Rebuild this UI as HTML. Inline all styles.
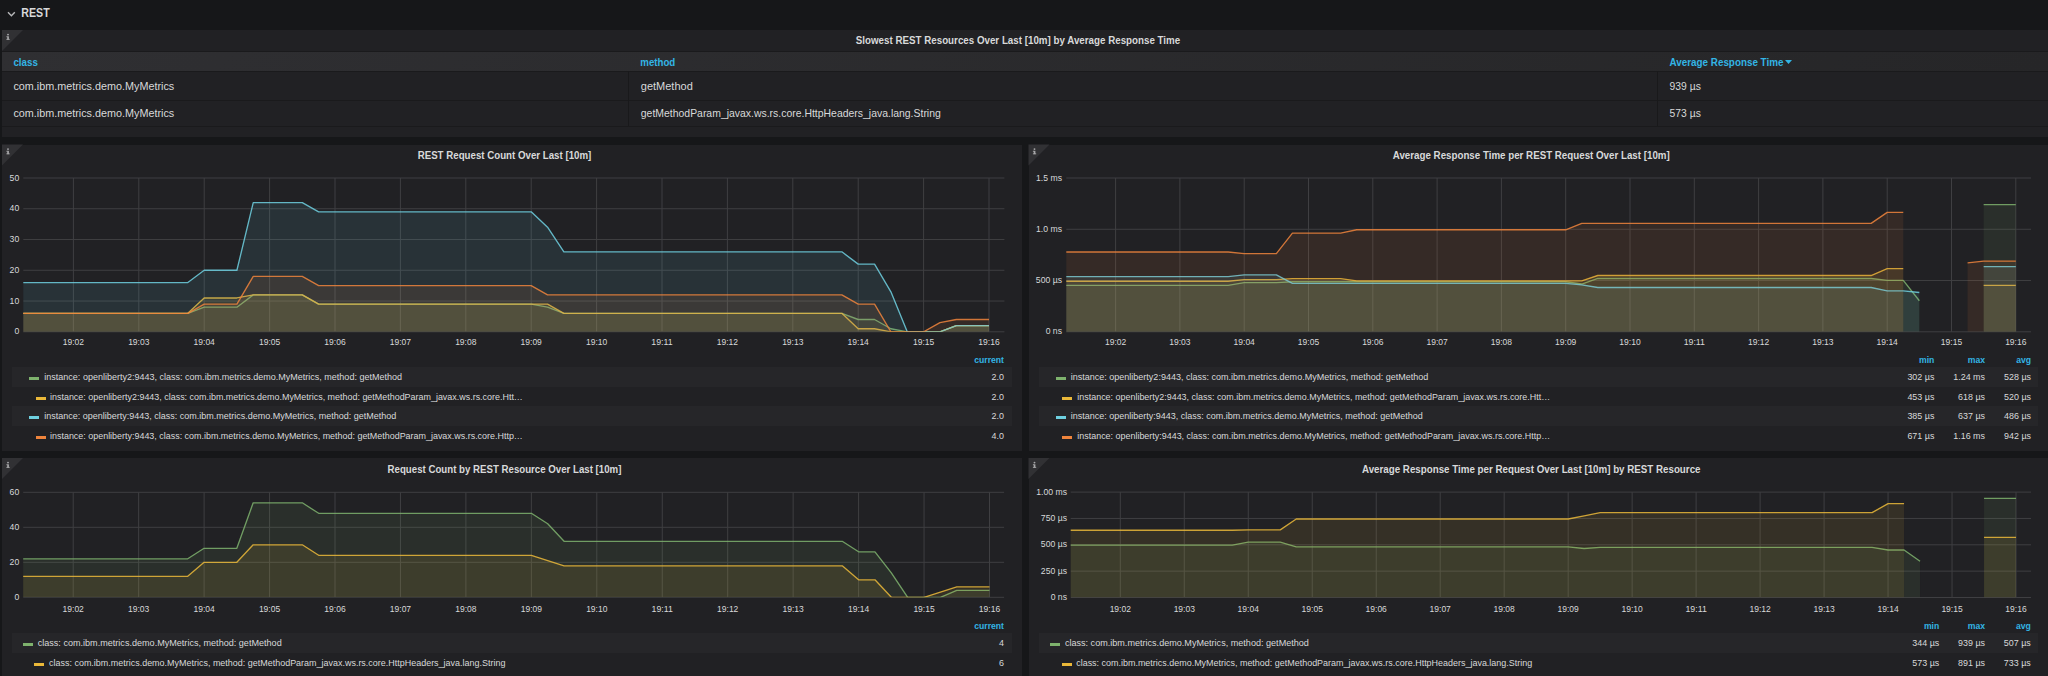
<!DOCTYPE html>
<html><head><meta charset="utf-8"><title>Grafana - REST</title>
<style>
html,body{margin:0;padding:0;width:2048px;height:676px;overflow:hidden;background:#161719;}
#wrap{position:relative;width:2048px;height:676px;overflow:hidden;font-family:"Liberation Sans",sans-serif;}
svg{position:absolute;left:0;top:0;}
svg text{font-family:"Liberation Sans",sans-serif;}
</style></head><body><div id="wrap">
<div style="position:absolute;left:2px;top:30px;width:2046px;height:107px;background:#212124;"></div><div style="position:absolute;left:2px;top:52px;width:2046px;height:19px;background:linear-gradient(135deg,#2f2f32,#262628);"></div><div style="position:absolute;left:2px;top:51px;width:2046px;height:1px;background:#1a1a1c;"></div><div style="position:absolute;left:2px;top:70.7px;width:2046px;height:1px;background:#1a1a1c;"></div><div style="position:absolute;left:2px;top:99.6px;width:2046px;height:1px;background:#1a1a1c;"></div><div style="position:absolute;left:2px;top:126px;width:2046px;height:1px;background:#1a1a1c;"></div><div style="position:absolute;left:628px;top:71px;width:1px;height:55px;background:#19191b;"></div><div style="position:absolute;left:1657px;top:71px;width:1px;height:55px;background:#19191b;"></div><div style="position:absolute;left:2px;top:144.5px;width:1019.5px;height:306.5px;background:#212124;"></div><div style="position:absolute;left:12px;top:367.3px;width:1000px;height:19.55px;background:#262629;"></div><div style="position:absolute;left:29px;top:377.275px;width:10px;height:3px;background:#7EB26D;"></div><div style="position:absolute;left:35.6px;top:396.825px;width:10px;height:3px;background:#EAB839;"></div><div style="position:absolute;left:12px;top:406.40000000000003px;width:1000px;height:19.55px;background:#262629;"></div><div style="position:absolute;left:29px;top:416.375px;width:10px;height:3px;background:#6ED0E0;"></div><div style="position:absolute;left:35.6px;top:435.925px;width:10px;height:3px;background:#EF843C;"></div><div style="position:absolute;left:1028.5px;top:144.5px;width:1019.5px;height:306.5px;background:#212124;"></div><div style="position:absolute;left:1038.5px;top:367.3px;width:999.7px;height:19.55px;background:#262629;"></div><div style="position:absolute;left:1055.7px;top:377.275px;width:10px;height:3px;background:#7EB26D;"></div><div style="position:absolute;left:1062.3px;top:396.825px;width:10px;height:3px;background:#EAB839;"></div><div style="position:absolute;left:1038.5px;top:406.40000000000003px;width:999.7px;height:19.55px;background:#262629;"></div><div style="position:absolute;left:1055.7px;top:416.375px;width:10px;height:3px;background:#6ED0E0;"></div><div style="position:absolute;left:1062.3px;top:435.925px;width:10px;height:3px;background:#EF843C;"></div><div style="position:absolute;left:2px;top:458px;width:1019.5px;height:222px;background:#212124;"></div><div style="position:absolute;left:12px;top:632.7px;width:1000px;height:20.2px;background:#262629;"></div><div style="position:absolute;left:23.2px;top:643.0000000000001px;width:10px;height:3px;background:#7EB26D;"></div><div style="position:absolute;left:34.3px;top:663.2000000000002px;width:10px;height:3px;background:#EAB839;"></div><div style="position:absolute;left:1028.5px;top:458px;width:1019.5px;height:222px;background:#212124;"></div><div style="position:absolute;left:1038.5px;top:632.7px;width:999.7px;height:20.2px;background:#262629;"></div><div style="position:absolute;left:1050.4px;top:643.0000000000001px;width:10px;height:3px;background:#7EB26D;"></div><div style="position:absolute;left:1061.5px;top:663.2000000000002px;width:10px;height:3px;background:#EAB839;"></div>
<svg width="2048" height="676" viewBox="0 0 2048 676">
<text x="21.3" y="16.7" font-size="12.4" fill="#d8d9da" text-anchor="start" font-weight="bold" textLength="28.4" lengthAdjust="spacingAndGlyphs">REST</text><path d="M8,12.3 L11.4,15.8 L14.8,12.3" fill="none" stroke="#b7b8ba" stroke-width="1.4"/><path d="M2,30 L23,30 L2,51 Z" fill="#313134"/><g fill="#a8a8aa"><circle cx="8.0" cy="34.6" r="0.95"/><rect x="7.2" y="36.3" width="1.7" height="3.3"/><rect x="6.4" y="38.9" width="3.3" height="0.9"/><rect x="6.4" y="36.3" width="1.2" height="0.9"/></g><text x="1018" y="44.0" font-size="11.5" fill="#d8d9da" text-anchor="middle" font-weight="bold" textLength="324.4" lengthAdjust="spacingAndGlyphs">Slowest REST Resources Over Last [10m] by Average Response Time</text><text x="13.4" y="65.6" font-size="10.8" fill="#33b5e5" text-anchor="start" font-weight="bold" textLength="24.5" lengthAdjust="spacingAndGlyphs">class</text><text x="640.3" y="65.6" font-size="10.8" fill="#33b5e5" text-anchor="start" font-weight="bold" textLength="35" lengthAdjust="spacingAndGlyphs">method</text><text x="1669.6" y="65.6" font-size="10.8" fill="#33b5e5" text-anchor="start" font-weight="bold" textLength="113.8" lengthAdjust="spacingAndGlyphs">Average Response Time</text><path d="M1785,60.1 L1792,60.1 L1788.5,64 Z" fill="#33b5e5"/><text x="13.4" y="90.45" font-size="11" fill="#d8d9da" text-anchor="start" textLength="160.8" lengthAdjust="spacingAndGlyphs">com.ibm.metrics.demo.MyMetrics</text><text x="640.8" y="90.45" font-size="11" fill="#d8d9da" text-anchor="start">getMethod</text><text x="1669.6" y="90.45" font-size="11" fill="#d8d9da" text-anchor="start" textLength="31.25" lengthAdjust="spacingAndGlyphs">939 µs</text><text x="13.4" y="116.7" font-size="11" fill="#d8d9da" text-anchor="start" textLength="160.8" lengthAdjust="spacingAndGlyphs">com.ibm.metrics.demo.MyMetrics</text><text x="640.8" y="116.7" font-size="11" fill="#d8d9da" text-anchor="start" textLength="300" lengthAdjust="spacingAndGlyphs">getMethodParam_javax.ws.rs.core.HttpHeaders_java.lang.String</text><text x="1669.6" y="116.7" font-size="11" fill="#d8d9da" text-anchor="start" textLength="31.25" lengthAdjust="spacingAndGlyphs">573 µs</text><path d="M2,144.5 L23,144.5 L2,165.5 Z" fill="#313134"/><g fill="#a8a8aa"><circle cx="8.0" cy="149.1" r="0.95"/><rect x="7.2" y="150.8" width="1.7" height="3.3"/><rect x="6.4" y="153.4" width="3.3" height="0.9"/><rect x="6.4" y="150.8" width="1.2" height="0.9"/></g><text x="504.5" y="158.8" font-size="11.3" fill="#d8d9da" text-anchor="middle" font-weight="bold" textLength="173.7" lengthAdjust="spacingAndGlyphs">REST Request Count Over Last [10m]</text><line x1="23.3" y1="331.80" x2="1004.4" y2="331.80" stroke="#3f3f42" stroke-width="1"/><text x="19.2" y="334.40000000000003" font-size="9.4" fill="#d8d9da" text-anchor="end" textLength="4.81" lengthAdjust="spacingAndGlyphs">0</text><line x1="23.3" y1="301.04" x2="1004.4" y2="301.04" stroke="#3f3f42" stroke-width="1"/><text x="19.2" y="303.64000000000004" font-size="9.4" fill="#d8d9da" text-anchor="end" textLength="9.62" lengthAdjust="spacingAndGlyphs">10</text><line x1="23.3" y1="270.28" x2="1004.4" y2="270.28" stroke="#3f3f42" stroke-width="1"/><text x="19.2" y="272.88" font-size="9.4" fill="#d8d9da" text-anchor="end" textLength="9.62" lengthAdjust="spacingAndGlyphs">20</text><line x1="23.3" y1="239.52" x2="1004.4" y2="239.52" stroke="#3f3f42" stroke-width="1"/><text x="19.2" y="242.12" font-size="9.4" fill="#d8d9da" text-anchor="end" textLength="9.62" lengthAdjust="spacingAndGlyphs">30</text><line x1="23.3" y1="208.76" x2="1004.4" y2="208.76" stroke="#3f3f42" stroke-width="1"/><text x="19.2" y="211.35999999999999" font-size="9.4" fill="#d8d9da" text-anchor="end" textLength="9.62" lengthAdjust="spacingAndGlyphs">40</text><line x1="23.3" y1="178.00" x2="1004.4" y2="178.00" stroke="#3f3f42" stroke-width="1"/><text x="19.2" y="180.6" font-size="9.4" fill="#d8d9da" text-anchor="end" textLength="9.62" lengthAdjust="spacingAndGlyphs">50</text><line x1="73.40" y1="178" x2="73.40" y2="331.8" stroke="#3f3f42" stroke-width="1"/><text x="73.4" y="345.2" font-size="9.4" fill="#d8d9da" text-anchor="middle" textLength="21.3" lengthAdjust="spacingAndGlyphs">19:02</text><line x1="138.80" y1="178" x2="138.80" y2="331.8" stroke="#3f3f42" stroke-width="1"/><text x="138.8" y="345.2" font-size="9.4" fill="#d8d9da" text-anchor="middle" textLength="21.3" lengthAdjust="spacingAndGlyphs">19:03</text><line x1="204.20" y1="178" x2="204.20" y2="331.8" stroke="#3f3f42" stroke-width="1"/><text x="204.20000000000002" y="345.2" font-size="9.4" fill="#d8d9da" text-anchor="middle" textLength="21.3" lengthAdjust="spacingAndGlyphs">19:04</text><line x1="269.60" y1="178" x2="269.60" y2="331.8" stroke="#3f3f42" stroke-width="1"/><text x="269.6" y="345.2" font-size="9.4" fill="#d8d9da" text-anchor="middle" textLength="21.3" lengthAdjust="spacingAndGlyphs">19:05</text><line x1="335.00" y1="178" x2="335.00" y2="331.8" stroke="#3f3f42" stroke-width="1"/><text x="335.0" y="345.2" font-size="9.4" fill="#d8d9da" text-anchor="middle" textLength="21.3" lengthAdjust="spacingAndGlyphs">19:06</text><line x1="400.40" y1="178" x2="400.40" y2="331.8" stroke="#3f3f42" stroke-width="1"/><text x="400.4" y="345.2" font-size="9.4" fill="#d8d9da" text-anchor="middle" textLength="21.3" lengthAdjust="spacingAndGlyphs">19:07</text><line x1="465.80" y1="178" x2="465.80" y2="331.8" stroke="#3f3f42" stroke-width="1"/><text x="465.80000000000007" y="345.2" font-size="9.4" fill="#d8d9da" text-anchor="middle" textLength="21.3" lengthAdjust="spacingAndGlyphs">19:08</text><line x1="531.20" y1="178" x2="531.20" y2="331.8" stroke="#3f3f42" stroke-width="1"/><text x="531.2" y="345.2" font-size="9.4" fill="#d8d9da" text-anchor="middle" textLength="21.3" lengthAdjust="spacingAndGlyphs">19:09</text><line x1="596.60" y1="178" x2="596.60" y2="331.8" stroke="#3f3f42" stroke-width="1"/><text x="596.6" y="345.2" font-size="9.4" fill="#d8d9da" text-anchor="middle" textLength="21.3" lengthAdjust="spacingAndGlyphs">19:10</text><line x1="662.00" y1="178" x2="662.00" y2="331.8" stroke="#3f3f42" stroke-width="1"/><text x="662.0" y="345.2" font-size="9.4" fill="#d8d9da" text-anchor="middle" textLength="21.3" lengthAdjust="spacingAndGlyphs">19:11</text><line x1="727.40" y1="178" x2="727.40" y2="331.8" stroke="#3f3f42" stroke-width="1"/><text x="727.4" y="345.2" font-size="9.4" fill="#d8d9da" text-anchor="middle" textLength="21.3" lengthAdjust="spacingAndGlyphs">19:12</text><line x1="792.80" y1="178" x2="792.80" y2="331.8" stroke="#3f3f42" stroke-width="1"/><text x="792.8000000000001" y="345.2" font-size="9.4" fill="#d8d9da" text-anchor="middle" textLength="21.3" lengthAdjust="spacingAndGlyphs">19:13</text><line x1="858.20" y1="178" x2="858.20" y2="331.8" stroke="#3f3f42" stroke-width="1"/><text x="858.2" y="345.2" font-size="9.4" fill="#d8d9da" text-anchor="middle" textLength="21.3" lengthAdjust="spacingAndGlyphs">19:14</text><line x1="923.60" y1="178" x2="923.60" y2="331.8" stroke="#3f3f42" stroke-width="1"/><text x="923.6" y="345.2" font-size="9.4" fill="#d8d9da" text-anchor="middle" textLength="21.3" lengthAdjust="spacingAndGlyphs">19:15</text><line x1="989.00" y1="178" x2="989.00" y2="331.8" stroke="#3f3f42" stroke-width="1"/><text x="989.0000000000001" y="345.2" font-size="9.4" fill="#d8d9da" text-anchor="middle" textLength="21.3" lengthAdjust="spacingAndGlyphs">19:16</text><clipPath id="c1"><rect x="23.3" y="176" width="981.1" height="155.8"/></clipPath><g clip-path="url(#c1)"><path d="M22.30,313.34 L24.35,313.34 L40.70,313.34 L57.05,313.34 L73.40,313.34 L89.75,313.34 L106.10,313.34 L122.45,313.34 L138.80,313.34 L155.15,313.34 L171.50,313.34 L187.85,313.34 L204.20,307.19 L220.55,307.19 L236.90,307.19 L253.25,294.89 L269.60,294.89 L285.95,294.89 L302.30,294.89 L318.65,304.12 L335.00,304.12 L351.35,304.12 L367.70,304.12 L384.05,304.12 L400.40,304.12 L416.75,304.12 L433.10,304.12 L449.45,304.12 L465.80,304.12 L482.15,304.12 L498.50,304.12 L514.85,304.12 L531.20,304.12 L547.55,307.19 L563.90,313.34 L580.25,313.34 L596.60,313.34 L612.95,313.34 L629.30,313.34 L645.65,313.34 L662.00,313.34 L678.35,313.34 L694.70,313.34 L711.05,313.34 L727.40,313.34 L743.75,313.34 L760.10,313.34 L776.45,313.34 L792.80,313.34 L809.15,313.34 L825.50,313.34 L841.85,313.34 L858.20,319.50 L874.55,319.50 L890.90,328.72 L907.25,331.80 L923.60,331.80 L939.95,331.80 L956.30,325.65 L972.65,325.65 L989.00,325.65 L989.00,331.8 L22.30,331.8 Z" fill="#7EB26D" fill-opacity="0.1"/><path d="M22.30,313.34 L24.35,313.34 L40.70,313.34 L57.05,313.34 L73.40,313.34 L89.75,313.34 L106.10,313.34 L122.45,313.34 L138.80,313.34 L155.15,313.34 L171.50,313.34 L187.85,313.34 L204.20,307.19 L220.55,307.19 L236.90,307.19 L253.25,294.89 L269.60,294.89 L285.95,294.89 L302.30,294.89 L318.65,304.12 L335.00,304.12 L351.35,304.12 L367.70,304.12 L384.05,304.12 L400.40,304.12 L416.75,304.12 L433.10,304.12 L449.45,304.12 L465.80,304.12 L482.15,304.12 L498.50,304.12 L514.85,304.12 L531.20,304.12 L547.55,307.19 L563.90,313.34 L580.25,313.34 L596.60,313.34 L612.95,313.34 L629.30,313.34 L645.65,313.34 L662.00,313.34 L678.35,313.34 L694.70,313.34 L711.05,313.34 L727.40,313.34 L743.75,313.34 L760.10,313.34 L776.45,313.34 L792.80,313.34 L809.15,313.34 L825.50,313.34 L841.85,313.34 L858.20,319.50 L874.55,319.50 L890.90,328.72 L907.25,331.80 L923.60,331.80 L939.95,331.80 L956.30,325.65 L972.65,325.65 L989.00,325.65" fill="none" stroke="#7EB26D" stroke-width="1.35" stroke-opacity="0.85" stroke-linejoin="round"/><path d="M22.30,313.34 L24.35,313.34 L40.70,313.34 L57.05,313.34 L73.40,313.34 L89.75,313.34 L106.10,313.34 L122.45,313.34 L138.80,313.34 L155.15,313.34 L171.50,313.34 L187.85,313.34 L204.20,297.96 L220.55,297.96 L236.90,297.96 L253.25,294.89 L269.60,294.89 L285.95,294.89 L302.30,294.89 L318.65,304.12 L335.00,304.12 L351.35,304.12 L367.70,304.12 L384.05,304.12 L400.40,304.12 L416.75,304.12 L433.10,304.12 L449.45,304.12 L465.80,304.12 L482.15,304.12 L498.50,304.12 L514.85,304.12 L531.20,304.12 L547.55,304.12 L563.90,313.34 L580.25,313.34 L596.60,313.34 L612.95,313.34 L629.30,313.34 L645.65,313.34 L662.00,313.34 L678.35,313.34 L694.70,313.34 L711.05,313.34 L727.40,313.34 L743.75,313.34 L760.10,313.34 L776.45,313.34 L792.80,313.34 L809.15,313.34 L825.50,313.34 L841.85,313.34 L858.20,328.72 L874.55,328.72 L890.90,331.80 L907.25,331.80 L923.60,331.80 L939.95,331.80 L956.30,325.65 L972.65,325.65 L989.00,325.65 L989.00,331.8 L22.30,331.8 Z" fill="#EAB839" fill-opacity="0.1"/><path d="M22.30,313.34 L24.35,313.34 L40.70,313.34 L57.05,313.34 L73.40,313.34 L89.75,313.34 L106.10,313.34 L122.45,313.34 L138.80,313.34 L155.15,313.34 L171.50,313.34 L187.85,313.34 L204.20,297.96 L220.55,297.96 L236.90,297.96 L253.25,294.89 L269.60,294.89 L285.95,294.89 L302.30,294.89 L318.65,304.12 L335.00,304.12 L351.35,304.12 L367.70,304.12 L384.05,304.12 L400.40,304.12 L416.75,304.12 L433.10,304.12 L449.45,304.12 L465.80,304.12 L482.15,304.12 L498.50,304.12 L514.85,304.12 L531.20,304.12 L547.55,304.12 L563.90,313.34 L580.25,313.34 L596.60,313.34 L612.95,313.34 L629.30,313.34 L645.65,313.34 L662.00,313.34 L678.35,313.34 L694.70,313.34 L711.05,313.34 L727.40,313.34 L743.75,313.34 L760.10,313.34 L776.45,313.34 L792.80,313.34 L809.15,313.34 L825.50,313.34 L841.85,313.34 L858.20,328.72 L874.55,328.72 L890.90,331.80 L907.25,331.80 L923.60,331.80 L939.95,331.80 L956.30,325.65 L972.65,325.65 L989.00,325.65" fill="none" stroke="#EAB839" stroke-width="1.35" stroke-opacity="0.85" stroke-linejoin="round"/><path d="M22.30,282.58 L24.35,282.58 L40.70,282.58 L57.05,282.58 L73.40,282.58 L89.75,282.58 L106.10,282.58 L122.45,282.58 L138.80,282.58 L155.15,282.58 L171.50,282.58 L187.85,282.58 L204.20,270.28 L220.55,270.28 L236.90,270.28 L253.25,202.61 L269.60,202.61 L285.95,202.61 L302.30,202.61 L318.65,211.84 L335.00,211.84 L351.35,211.84 L367.70,211.84 L384.05,211.84 L400.40,211.84 L416.75,211.84 L433.10,211.84 L449.45,211.84 L465.80,211.84 L482.15,211.84 L498.50,211.84 L514.85,211.84 L531.20,211.84 L547.55,227.22 L563.90,251.82 L580.25,251.82 L596.60,251.82 L612.95,251.82 L629.30,251.82 L645.65,251.82 L662.00,251.82 L678.35,251.82 L694.70,251.82 L711.05,251.82 L727.40,251.82 L743.75,251.82 L760.10,251.82 L776.45,251.82 L792.80,251.82 L809.15,251.82 L825.50,251.82 L841.85,251.82 L858.20,264.13 L874.55,264.13 L890.90,291.81 L907.25,331.80 L923.60,331.80 L939.95,331.80 L956.30,325.65 L972.65,325.65 L989.00,325.65 L989.00,331.8 L22.30,331.8 Z" fill="#6ED0E0" fill-opacity="0.1"/><path d="M22.30,282.58 L24.35,282.58 L40.70,282.58 L57.05,282.58 L73.40,282.58 L89.75,282.58 L106.10,282.58 L122.45,282.58 L138.80,282.58 L155.15,282.58 L171.50,282.58 L187.85,282.58 L204.20,270.28 L220.55,270.28 L236.90,270.28 L253.25,202.61 L269.60,202.61 L285.95,202.61 L302.30,202.61 L318.65,211.84 L335.00,211.84 L351.35,211.84 L367.70,211.84 L384.05,211.84 L400.40,211.84 L416.75,211.84 L433.10,211.84 L449.45,211.84 L465.80,211.84 L482.15,211.84 L498.50,211.84 L514.85,211.84 L531.20,211.84 L547.55,227.22 L563.90,251.82 L580.25,251.82 L596.60,251.82 L612.95,251.82 L629.30,251.82 L645.65,251.82 L662.00,251.82 L678.35,251.82 L694.70,251.82 L711.05,251.82 L727.40,251.82 L743.75,251.82 L760.10,251.82 L776.45,251.82 L792.80,251.82 L809.15,251.82 L825.50,251.82 L841.85,251.82 L858.20,264.13 L874.55,264.13 L890.90,291.81 L907.25,331.80 L923.60,331.80 L939.95,331.80 L956.30,325.65 L972.65,325.65 L989.00,325.65" fill="none" stroke="#6ED0E0" stroke-width="1.35" stroke-opacity="0.85" stroke-linejoin="round"/><path d="M22.30,313.34 L24.35,313.34 L40.70,313.34 L57.05,313.34 L73.40,313.34 L89.75,313.34 L106.10,313.34 L122.45,313.34 L138.80,313.34 L155.15,313.34 L171.50,313.34 L187.85,313.34 L204.20,304.12 L220.55,304.12 L236.90,304.12 L253.25,276.43 L269.60,276.43 L285.95,276.43 L302.30,276.43 L318.65,285.66 L335.00,285.66 L351.35,285.66 L367.70,285.66 L384.05,285.66 L400.40,285.66 L416.75,285.66 L433.10,285.66 L449.45,285.66 L465.80,285.66 L482.15,285.66 L498.50,285.66 L514.85,285.66 L531.20,285.66 L547.55,294.89 L563.90,294.89 L580.25,294.89 L596.60,294.89 L612.95,294.89 L629.30,294.89 L645.65,294.89 L662.00,294.89 L678.35,294.89 L694.70,294.89 L711.05,294.89 L727.40,294.89 L743.75,294.89 L760.10,294.89 L776.45,294.89 L792.80,294.89 L809.15,294.89 L825.50,294.89 L841.85,294.89 L858.20,304.12 L874.55,304.12 L890.90,331.80 L907.25,331.80 L923.60,331.80 L939.95,322.57 L956.30,319.50 L972.65,319.50 L989.00,319.50 L989.00,331.8 L22.30,331.8 Z" fill="#EF843C" fill-opacity="0.1"/><path d="M22.30,313.34 L24.35,313.34 L40.70,313.34 L57.05,313.34 L73.40,313.34 L89.75,313.34 L106.10,313.34 L122.45,313.34 L138.80,313.34 L155.15,313.34 L171.50,313.34 L187.85,313.34 L204.20,304.12 L220.55,304.12 L236.90,304.12 L253.25,276.43 L269.60,276.43 L285.95,276.43 L302.30,276.43 L318.65,285.66 L335.00,285.66 L351.35,285.66 L367.70,285.66 L384.05,285.66 L400.40,285.66 L416.75,285.66 L433.10,285.66 L449.45,285.66 L465.80,285.66 L482.15,285.66 L498.50,285.66 L514.85,285.66 L531.20,285.66 L547.55,294.89 L563.90,294.89 L580.25,294.89 L596.60,294.89 L612.95,294.89 L629.30,294.89 L645.65,294.89 L662.00,294.89 L678.35,294.89 L694.70,294.89 L711.05,294.89 L727.40,294.89 L743.75,294.89 L760.10,294.89 L776.45,294.89 L792.80,294.89 L809.15,294.89 L825.50,294.89 L841.85,294.89 L858.20,304.12 L874.55,304.12 L890.90,331.80 L907.25,331.80 L923.60,331.80 L939.95,322.57 L956.30,319.50 L972.65,319.50 L989.00,319.50" fill="none" stroke="#EF843C" stroke-width="1.35" stroke-opacity="0.85" stroke-linejoin="round"/></g><text x="1004" y="363.0" font-size="9.4" fill="#33b5e5" text-anchor="end" font-weight="bold" textLength="29.79" lengthAdjust="spacingAndGlyphs">current</text><text x="44.3" y="380.275" font-size="9.3" fill="#d8d9da" text-anchor="start" textLength="357.7" lengthAdjust="spacingAndGlyphs">instance: openliberty2:9443, class: com.ibm.metrics.demo.MyMetrics, method: getMethod</text><text x="1004" y="380.275" font-size="9.3" fill="#d8d9da" text-anchor="end" textLength="12.41" lengthAdjust="spacingAndGlyphs">2.0</text><text x="50" y="399.825" font-size="9.3" fill="#d8d9da" text-anchor="start" textLength="472.8" lengthAdjust="spacingAndGlyphs">instance: openliberty2:9443, class: com.ibm.metrics.demo.MyMetrics, method: getMethodParam_javax.ws.rs.core.Htt…</text><text x="1004" y="399.825" font-size="9.3" fill="#d8d9da" text-anchor="end" textLength="12.41" lengthAdjust="spacingAndGlyphs">2.0</text><text x="44.3" y="419.375" font-size="9.3" fill="#d8d9da" text-anchor="start" textLength="352" lengthAdjust="spacingAndGlyphs">instance: openliberty:9443, class: com.ibm.metrics.demo.MyMetrics, method: getMethod</text><text x="1004" y="419.375" font-size="9.3" fill="#d8d9da" text-anchor="end" textLength="12.41" lengthAdjust="spacingAndGlyphs">2.0</text><text x="50" y="438.925" font-size="9.3" fill="#d8d9da" text-anchor="start" textLength="472.8" lengthAdjust="spacingAndGlyphs">instance: openliberty:9443, class: com.ibm.metrics.demo.MyMetrics, method: getMethodParam_javax.ws.rs.core.Http…</text><text x="1004" y="438.925" font-size="9.3" fill="#d8d9da" text-anchor="end" textLength="12.41" lengthAdjust="spacingAndGlyphs">4.0</text><path d="M1028.5,144.5 L1049.5,144.5 L1028.5,165.5 Z" fill="#313134"/><g fill="#a8a8aa"><circle cx="1034.5" cy="149.1" r="0.95"/><rect x="1033.7" y="150.8" width="1.7" height="3.3"/><rect x="1032.9" y="153.4" width="3.3" height="0.9"/><rect x="1032.9" y="150.8" width="1.2" height="0.9"/></g><text x="1531.25" y="158.8" font-size="11.3" fill="#d8d9da" text-anchor="middle" font-weight="bold" textLength="277" lengthAdjust="spacingAndGlyphs">Average Response Time per REST Request Over Last [10m]</text><line x1="1066.3" y1="331.80" x2="2031" y2="331.80" stroke="#3f3f42" stroke-width="1"/><text x="1062" y="334.40000000000003" font-size="9.4" fill="#d8d9da" text-anchor="end" textLength="16.34" lengthAdjust="spacingAndGlyphs">0 ns</text><line x1="1066.3" y1="280.53" x2="2031" y2="280.53" stroke="#3f3f42" stroke-width="1"/><text x="1062" y="283.1333333333334" font-size="9.4" fill="#d8d9da" text-anchor="end" textLength="26.14" lengthAdjust="spacingAndGlyphs">500 µs</text><line x1="1066.3" y1="229.27" x2="2031" y2="229.27" stroke="#3f3f42" stroke-width="1"/><text x="1062" y="231.86666666666667" font-size="9.4" fill="#d8d9da" text-anchor="end" textLength="25.95" lengthAdjust="spacingAndGlyphs">1.0 ms</text><line x1="1066.3" y1="178.00" x2="2031" y2="178.00" stroke="#3f3f42" stroke-width="1"/><text x="1062" y="180.6" font-size="9.4" fill="#d8d9da" text-anchor="end" textLength="25.95" lengthAdjust="spacingAndGlyphs">1.5 ms</text><line x1="1115.60" y1="178" x2="1115.60" y2="331.8" stroke="#3f3f42" stroke-width="1"/><text x="1115.6" y="345.2" font-size="9.4" fill="#d8d9da" text-anchor="middle" textLength="21.3" lengthAdjust="spacingAndGlyphs">19:02</text><line x1="1179.90" y1="178" x2="1179.90" y2="331.8" stroke="#3f3f42" stroke-width="1"/><text x="1179.8999999999999" y="345.2" font-size="9.4" fill="#d8d9da" text-anchor="middle" textLength="21.3" lengthAdjust="spacingAndGlyphs">19:03</text><line x1="1244.20" y1="178" x2="1244.20" y2="331.8" stroke="#3f3f42" stroke-width="1"/><text x="1244.1999999999998" y="345.2" font-size="9.4" fill="#d8d9da" text-anchor="middle" textLength="21.3" lengthAdjust="spacingAndGlyphs">19:04</text><line x1="1308.50" y1="178" x2="1308.50" y2="331.8" stroke="#3f3f42" stroke-width="1"/><text x="1308.5" y="345.2" font-size="9.4" fill="#d8d9da" text-anchor="middle" textLength="21.3" lengthAdjust="spacingAndGlyphs">19:05</text><line x1="1372.80" y1="178" x2="1372.80" y2="331.8" stroke="#3f3f42" stroke-width="1"/><text x="1372.8" y="345.2" font-size="9.4" fill="#d8d9da" text-anchor="middle" textLength="21.3" lengthAdjust="spacingAndGlyphs">19:06</text><line x1="1437.10" y1="178" x2="1437.10" y2="331.8" stroke="#3f3f42" stroke-width="1"/><text x="1437.1" y="345.2" font-size="9.4" fill="#d8d9da" text-anchor="middle" textLength="21.3" lengthAdjust="spacingAndGlyphs">19:07</text><line x1="1501.40" y1="178" x2="1501.40" y2="331.8" stroke="#3f3f42" stroke-width="1"/><text x="1501.3999999999999" y="345.2" font-size="9.4" fill="#d8d9da" text-anchor="middle" textLength="21.3" lengthAdjust="spacingAndGlyphs">19:08</text><line x1="1565.70" y1="178" x2="1565.70" y2="331.8" stroke="#3f3f42" stroke-width="1"/><text x="1565.6999999999998" y="345.2" font-size="9.4" fill="#d8d9da" text-anchor="middle" textLength="21.3" lengthAdjust="spacingAndGlyphs">19:09</text><line x1="1630.00" y1="178" x2="1630.00" y2="331.8" stroke="#3f3f42" stroke-width="1"/><text x="1630.0" y="345.2" font-size="9.4" fill="#d8d9da" text-anchor="middle" textLength="21.3" lengthAdjust="spacingAndGlyphs">19:10</text><line x1="1694.30" y1="178" x2="1694.30" y2="331.8" stroke="#3f3f42" stroke-width="1"/><text x="1694.2999999999997" y="345.2" font-size="9.4" fill="#d8d9da" text-anchor="middle" textLength="21.3" lengthAdjust="spacingAndGlyphs">19:11</text><line x1="1758.60" y1="178" x2="1758.60" y2="331.8" stroke="#3f3f42" stroke-width="1"/><text x="1758.6" y="345.2" font-size="9.4" fill="#d8d9da" text-anchor="middle" textLength="21.3" lengthAdjust="spacingAndGlyphs">19:12</text><line x1="1822.90" y1="178" x2="1822.90" y2="331.8" stroke="#3f3f42" stroke-width="1"/><text x="1822.8999999999999" y="345.2" font-size="9.4" fill="#d8d9da" text-anchor="middle" textLength="21.3" lengthAdjust="spacingAndGlyphs">19:13</text><line x1="1887.20" y1="178" x2="1887.20" y2="331.8" stroke="#3f3f42" stroke-width="1"/><text x="1887.1999999999998" y="345.2" font-size="9.4" fill="#d8d9da" text-anchor="middle" textLength="21.3" lengthAdjust="spacingAndGlyphs">19:14</text><line x1="1951.50" y1="178" x2="1951.50" y2="331.8" stroke="#3f3f42" stroke-width="1"/><text x="1951.5" y="345.2" font-size="9.4" fill="#d8d9da" text-anchor="middle" textLength="21.3" lengthAdjust="spacingAndGlyphs">19:15</text><line x1="2015.80" y1="178" x2="2015.80" y2="331.8" stroke="#3f3f42" stroke-width="1"/><text x="2015.7999999999997" y="345.2" font-size="9.4" fill="#d8d9da" text-anchor="middle" textLength="21.3" lengthAdjust="spacingAndGlyphs">19:16</text><clipPath id="c2"><rect x="1066.3" y="176" width="964.7" height="155.8"/></clipPath><g clip-path="url(#c2)"><path d="M1065.30,285.35 L1067.38,285.35 L1083.45,285.35 L1099.52,285.35 L1115.60,285.35 L1131.67,285.35 L1147.75,285.35 L1163.82,285.35 L1179.90,285.35 L1195.97,285.35 L1212.05,285.35 L1228.12,285.35 L1244.20,282.58 L1260.27,282.58 L1276.35,282.58 L1292.42,281.76 L1308.50,281.76 L1324.57,281.76 L1340.65,281.76 L1356.72,281.76 L1372.80,281.76 L1388.88,281.76 L1404.95,281.76 L1421.02,281.76 L1437.10,281.76 L1453.17,281.76 L1469.25,281.76 L1485.32,281.76 L1501.40,281.76 L1517.47,281.76 L1533.55,281.76 L1549.62,281.76 L1565.70,281.76 L1581.77,284.02 L1597.85,278.48 L1613.92,278.48 L1630.00,278.48 L1646.07,278.48 L1662.15,278.48 L1678.22,278.48 L1694.30,278.48 L1710.38,278.48 L1726.45,278.48 L1742.52,278.48 L1758.60,278.48 L1774.67,278.48 L1790.75,278.48 L1806.82,278.48 L1822.90,278.48 L1838.97,278.48 L1855.05,278.48 L1871.12,278.48 L1887.20,280.43 L1903.27,280.43 L1919.35,300.73 L1919.35,331.8 L1065.30,331.8 Z" fill="#7EB26D" fill-opacity="0.1"/><path d="M1065.30,285.35 L1067.38,285.35 L1083.45,285.35 L1099.52,285.35 L1115.60,285.35 L1131.67,285.35 L1147.75,285.35 L1163.82,285.35 L1179.90,285.35 L1195.97,285.35 L1212.05,285.35 L1228.12,285.35 L1244.20,282.58 L1260.27,282.58 L1276.35,282.58 L1292.42,281.76 L1308.50,281.76 L1324.57,281.76 L1340.65,281.76 L1356.72,281.76 L1372.80,281.76 L1388.88,281.76 L1404.95,281.76 L1421.02,281.76 L1437.10,281.76 L1453.17,281.76 L1469.25,281.76 L1485.32,281.76 L1501.40,281.76 L1517.47,281.76 L1533.55,281.76 L1549.62,281.76 L1565.70,281.76 L1581.77,284.02 L1597.85,278.48 L1613.92,278.48 L1630.00,278.48 L1646.07,278.48 L1662.15,278.48 L1678.22,278.48 L1694.30,278.48 L1710.38,278.48 L1726.45,278.48 L1742.52,278.48 L1758.60,278.48 L1774.67,278.48 L1790.75,278.48 L1806.82,278.48 L1822.90,278.48 L1838.97,278.48 L1855.05,278.48 L1871.12,278.48 L1887.20,280.43 L1903.27,280.43 L1919.35,300.73" fill="none" stroke="#7EB26D" stroke-width="1.35" stroke-opacity="0.85" stroke-linejoin="round"/><path d="M1983.65,204.66 L1999.72,204.66 L2015.80,204.66 L2015.80,331.8 L1983.65,331.8 Z" fill="#7EB26D" fill-opacity="0.1"/><path d="M1983.65,204.66 L1999.72,204.66 L2015.80,204.66" fill="none" stroke="#7EB26D" stroke-width="1.35" stroke-opacity="0.85" stroke-linejoin="round"/><path d="M1065.30,281.25 L1067.38,281.25 L1083.45,281.25 L1099.52,281.25 L1115.60,281.25 L1131.67,281.25 L1147.75,281.25 L1163.82,281.25 L1179.90,281.25 L1195.97,281.25 L1212.05,281.25 L1228.12,281.25 L1244.20,279.61 L1260.27,279.61 L1276.35,279.61 L1292.42,278.59 L1308.50,278.59 L1324.57,278.59 L1340.65,278.59 L1356.72,280.94 L1372.80,280.94 L1388.88,280.94 L1404.95,280.94 L1421.02,280.94 L1437.10,280.94 L1453.17,280.94 L1469.25,280.94 L1485.32,280.94 L1501.40,280.94 L1517.47,280.94 L1533.55,280.94 L1549.62,280.94 L1565.70,280.94 L1581.77,280.94 L1597.85,275.51 L1613.92,275.51 L1630.00,275.51 L1646.07,275.51 L1662.15,275.51 L1678.22,275.51 L1694.30,275.51 L1710.38,275.51 L1726.45,275.51 L1742.52,275.51 L1758.60,275.51 L1774.67,275.51 L1790.75,275.51 L1806.82,275.51 L1822.90,275.51 L1838.97,275.51 L1855.05,275.51 L1871.12,275.51 L1887.20,268.64 L1903.27,268.64 L1903.27,331.8 L1065.30,331.8 Z" fill="#EAB839" fill-opacity="0.1"/><path d="M1065.30,281.25 L1067.38,281.25 L1083.45,281.25 L1099.52,281.25 L1115.60,281.25 L1131.67,281.25 L1147.75,281.25 L1163.82,281.25 L1179.90,281.25 L1195.97,281.25 L1212.05,281.25 L1228.12,281.25 L1244.20,279.61 L1260.27,279.61 L1276.35,279.61 L1292.42,278.59 L1308.50,278.59 L1324.57,278.59 L1340.65,278.59 L1356.72,280.94 L1372.80,280.94 L1388.88,280.94 L1404.95,280.94 L1421.02,280.94 L1437.10,280.94 L1453.17,280.94 L1469.25,280.94 L1485.32,280.94 L1501.40,280.94 L1517.47,280.94 L1533.55,280.94 L1549.62,280.94 L1565.70,280.94 L1581.77,280.94 L1597.85,275.51 L1613.92,275.51 L1630.00,275.51 L1646.07,275.51 L1662.15,275.51 L1678.22,275.51 L1694.30,275.51 L1710.38,275.51 L1726.45,275.51 L1742.52,275.51 L1758.60,275.51 L1774.67,275.51 L1790.75,275.51 L1806.82,275.51 L1822.90,275.51 L1838.97,275.51 L1855.05,275.51 L1871.12,275.51 L1887.20,268.64 L1903.27,268.64" fill="none" stroke="#EAB839" stroke-width="1.35" stroke-opacity="0.85" stroke-linejoin="round"/><path d="M1983.65,285.35 L1999.72,285.35 L2015.80,285.35 L2015.80,331.8 L1983.65,331.8 Z" fill="#EAB839" fill-opacity="0.1"/><path d="M1983.65,285.35 L1999.72,285.35 L2015.80,285.35" fill="none" stroke="#EAB839" stroke-width="1.35" stroke-opacity="0.85" stroke-linejoin="round"/><path d="M1065.30,276.64 L1067.38,276.64 L1083.45,276.64 L1099.52,276.64 L1115.60,276.64 L1131.67,276.64 L1147.75,276.64 L1163.82,276.64 L1179.90,276.64 L1195.97,276.64 L1212.05,276.64 L1228.12,276.64 L1244.20,274.89 L1260.27,274.89 L1276.35,274.89 L1292.42,283.40 L1308.50,283.40 L1324.57,283.40 L1340.65,283.40 L1356.72,283.40 L1372.80,283.40 L1388.88,283.40 L1404.95,283.40 L1421.02,283.40 L1437.10,283.40 L1453.17,283.40 L1469.25,283.40 L1485.32,283.40 L1501.40,283.40 L1517.47,283.40 L1533.55,283.40 L1549.62,283.40 L1565.70,283.40 L1581.77,284.84 L1597.85,287.51 L1613.92,287.51 L1630.00,287.51 L1646.07,287.51 L1662.15,287.51 L1678.22,287.51 L1694.30,287.51 L1710.38,287.51 L1726.45,287.51 L1742.52,287.51 L1758.60,287.51 L1774.67,287.51 L1790.75,287.51 L1806.82,287.51 L1822.90,287.51 L1838.97,287.51 L1855.05,287.51 L1871.12,287.51 L1887.20,290.89 L1903.27,290.89 L1919.35,292.53 L1919.35,331.8 L1065.30,331.8 Z" fill="#6ED0E0" fill-opacity="0.1"/><path d="M1065.30,276.64 L1067.38,276.64 L1083.45,276.64 L1099.52,276.64 L1115.60,276.64 L1131.67,276.64 L1147.75,276.64 L1163.82,276.64 L1179.90,276.64 L1195.97,276.64 L1212.05,276.64 L1228.12,276.64 L1244.20,274.89 L1260.27,274.89 L1276.35,274.89 L1292.42,283.40 L1308.50,283.40 L1324.57,283.40 L1340.65,283.40 L1356.72,283.40 L1372.80,283.40 L1388.88,283.40 L1404.95,283.40 L1421.02,283.40 L1437.10,283.40 L1453.17,283.40 L1469.25,283.40 L1485.32,283.40 L1501.40,283.40 L1517.47,283.40 L1533.55,283.40 L1549.62,283.40 L1565.70,283.40 L1581.77,284.84 L1597.85,287.51 L1613.92,287.51 L1630.00,287.51 L1646.07,287.51 L1662.15,287.51 L1678.22,287.51 L1694.30,287.51 L1710.38,287.51 L1726.45,287.51 L1742.52,287.51 L1758.60,287.51 L1774.67,287.51 L1790.75,287.51 L1806.82,287.51 L1822.90,287.51 L1838.97,287.51 L1855.05,287.51 L1871.12,287.51 L1887.20,290.89 L1903.27,290.89 L1919.35,292.53" fill="none" stroke="#6ED0E0" stroke-width="1.35" stroke-opacity="0.85" stroke-linejoin="round"/><path d="M1983.65,266.69 L1999.72,266.69 L2015.80,266.69 L2015.80,331.8 L1983.65,331.8 Z" fill="#6ED0E0" fill-opacity="0.1"/><path d="M1983.65,266.69 L1999.72,266.69 L2015.80,266.69" fill="none" stroke="#6ED0E0" stroke-width="1.35" stroke-opacity="0.85" stroke-linejoin="round"/><path d="M1065.30,252.03 L1067.38,252.03 L1083.45,252.03 L1099.52,252.03 L1115.60,252.03 L1131.67,252.03 L1147.75,252.03 L1163.82,252.03 L1179.90,252.03 L1195.97,252.03 L1212.05,252.03 L1228.12,252.03 L1244.20,253.67 L1260.27,253.67 L1276.35,253.67 L1292.42,233.06 L1308.50,233.06 L1324.57,233.06 L1340.65,233.06 L1356.72,229.78 L1372.80,229.78 L1388.88,229.78 L1404.95,229.78 L1421.02,229.78 L1437.10,229.78 L1453.17,229.78 L1469.25,229.78 L1485.32,229.78 L1501.40,229.78 L1517.47,229.78 L1533.55,229.78 L1549.62,229.78 L1565.70,229.78 L1581.77,223.42 L1597.85,223.42 L1613.92,223.42 L1630.00,223.42 L1646.07,223.42 L1662.15,223.42 L1678.22,223.42 L1694.30,223.42 L1710.38,223.42 L1726.45,223.42 L1742.52,223.42 L1758.60,223.42 L1774.67,223.42 L1790.75,223.42 L1806.82,223.42 L1822.90,223.42 L1838.97,223.42 L1855.05,223.42 L1871.12,223.42 L1887.20,212.35 L1903.27,212.35 L1903.27,331.8 L1065.30,331.8 Z" fill="#EF843C" fill-opacity="0.1"/><path d="M1065.30,252.03 L1067.38,252.03 L1083.45,252.03 L1099.52,252.03 L1115.60,252.03 L1131.67,252.03 L1147.75,252.03 L1163.82,252.03 L1179.90,252.03 L1195.97,252.03 L1212.05,252.03 L1228.12,252.03 L1244.20,253.67 L1260.27,253.67 L1276.35,253.67 L1292.42,233.06 L1308.50,233.06 L1324.57,233.06 L1340.65,233.06 L1356.72,229.78 L1372.80,229.78 L1388.88,229.78 L1404.95,229.78 L1421.02,229.78 L1437.10,229.78 L1453.17,229.78 L1469.25,229.78 L1485.32,229.78 L1501.40,229.78 L1517.47,229.78 L1533.55,229.78 L1549.62,229.78 L1565.70,229.78 L1581.77,223.42 L1597.85,223.42 L1613.92,223.42 L1630.00,223.42 L1646.07,223.42 L1662.15,223.42 L1678.22,223.42 L1694.30,223.42 L1710.38,223.42 L1726.45,223.42 L1742.52,223.42 L1758.60,223.42 L1774.67,223.42 L1790.75,223.42 L1806.82,223.42 L1822.90,223.42 L1838.97,223.42 L1855.05,223.42 L1871.12,223.42 L1887.20,212.35 L1903.27,212.35" fill="none" stroke="#EF843C" stroke-width="1.35" stroke-opacity="0.85" stroke-linejoin="round"/><path d="M1967.57,262.90 L1983.65,261.05 L1999.72,261.05 L2015.80,261.05 L2015.80,331.8 L1967.57,331.8 Z" fill="#EF843C" fill-opacity="0.1"/><path d="M1967.57,262.90 L1983.65,261.05 L1999.72,261.05 L2015.80,261.05" fill="none" stroke="#EF843C" stroke-width="1.35" stroke-opacity="0.85" stroke-linejoin="round"/></g><text x="1934.4" y="363.0" font-size="9.4" fill="#33b5e5" text-anchor="end" font-weight="bold" textLength="15.37" lengthAdjust="spacingAndGlyphs">min</text><text x="1985" y="363.0" font-size="9.4" fill="#33b5e5" text-anchor="end" font-weight="bold" textLength="17.31" lengthAdjust="spacingAndGlyphs">max</text><text x="2031.1" y="363.0" font-size="9.4" fill="#33b5e5" text-anchor="end" font-weight="bold" textLength="14.9" lengthAdjust="spacingAndGlyphs">avg</text><text x="1070.7" y="380.275" font-size="9.3" fill="#d8d9da" text-anchor="start" textLength="357.7" lengthAdjust="spacingAndGlyphs">instance: openliberty2:9443, class: com.ibm.metrics.demo.MyMetrics, method: getMethod</text><text x="1934.4" y="380.275" font-size="9.3" fill="#d8d9da" text-anchor="end" textLength="26.98" lengthAdjust="spacingAndGlyphs">302 µs</text><text x="1985" y="380.275" font-size="9.3" fill="#d8d9da" text-anchor="end" textLength="31.76" lengthAdjust="spacingAndGlyphs">1.24 ms</text><text x="2031.1" y="380.275" font-size="9.3" fill="#d8d9da" text-anchor="end" textLength="26.98" lengthAdjust="spacingAndGlyphs">528 µs</text><text x="1077.3" y="399.825" font-size="9.3" fill="#d8d9da" text-anchor="start" textLength="472.8" lengthAdjust="spacingAndGlyphs">instance: openliberty2:9443, class: com.ibm.metrics.demo.MyMetrics, method: getMethodParam_javax.ws.rs.core.Htt…</text><text x="1934.4" y="399.825" font-size="9.3" fill="#d8d9da" text-anchor="end" textLength="26.98" lengthAdjust="spacingAndGlyphs">453 µs</text><text x="1985" y="399.825" font-size="9.3" fill="#d8d9da" text-anchor="end" textLength="26.98" lengthAdjust="spacingAndGlyphs">618 µs</text><text x="2031.1" y="399.825" font-size="9.3" fill="#d8d9da" text-anchor="end" textLength="26.98" lengthAdjust="spacingAndGlyphs">520 µs</text><text x="1070.7" y="419.375" font-size="9.3" fill="#d8d9da" text-anchor="start" textLength="352" lengthAdjust="spacingAndGlyphs">instance: openliberty:9443, class: com.ibm.metrics.demo.MyMetrics, method: getMethod</text><text x="1934.4" y="419.375" font-size="9.3" fill="#d8d9da" text-anchor="end" textLength="26.98" lengthAdjust="spacingAndGlyphs">385 µs</text><text x="1985" y="419.375" font-size="9.3" fill="#d8d9da" text-anchor="end" textLength="26.98" lengthAdjust="spacingAndGlyphs">637 µs</text><text x="2031.1" y="419.375" font-size="9.3" fill="#d8d9da" text-anchor="end" textLength="26.98" lengthAdjust="spacingAndGlyphs">486 µs</text><text x="1077.3" y="438.925" font-size="9.3" fill="#d8d9da" text-anchor="start" textLength="472.8" lengthAdjust="spacingAndGlyphs">instance: openliberty:9443, class: com.ibm.metrics.demo.MyMetrics, method: getMethodParam_javax.ws.rs.core.Http…</text><text x="1934.4" y="438.925" font-size="9.3" fill="#d8d9da" text-anchor="end" textLength="26.98" lengthAdjust="spacingAndGlyphs">671 µs</text><text x="1985" y="438.925" font-size="9.3" fill="#d8d9da" text-anchor="end" textLength="31.76" lengthAdjust="spacingAndGlyphs">1.16 ms</text><text x="2031.1" y="438.925" font-size="9.3" fill="#d8d9da" text-anchor="end" textLength="26.98" lengthAdjust="spacingAndGlyphs">942 µs</text><path d="M2,458 L23,458 L2,479 Z" fill="#313134"/><g fill="#a8a8aa"><circle cx="8.0" cy="462.6" r="0.95"/><rect x="7.2" y="464.3" width="1.7" height="3.3"/><rect x="6.4" y="466.9" width="3.3" height="0.9"/><rect x="6.4" y="464.3" width="1.2" height="0.9"/></g><text x="504.5" y="473.3" font-size="11.3" fill="#d8d9da" text-anchor="middle" font-weight="bold" textLength="233.8" lengthAdjust="spacingAndGlyphs">Request Count by REST Resource Over Last [10m]</text><line x1="23.2" y1="597.30" x2="1004.1" y2="597.30" stroke="#3f3f42" stroke-width="1"/><text x="19.2" y="599.9" font-size="9.4" fill="#d8d9da" text-anchor="end" textLength="4.81" lengthAdjust="spacingAndGlyphs">0</text><line x1="23.2" y1="562.30" x2="1004.1" y2="562.30" stroke="#3f3f42" stroke-width="1"/><text x="19.2" y="564.9" font-size="9.4" fill="#d8d9da" text-anchor="end" textLength="9.62" lengthAdjust="spacingAndGlyphs">20</text><line x1="23.2" y1="527.30" x2="1004.1" y2="527.30" stroke="#3f3f42" stroke-width="1"/><text x="19.2" y="529.9" font-size="9.4" fill="#d8d9da" text-anchor="end" textLength="9.62" lengthAdjust="spacingAndGlyphs">40</text><line x1="23.2" y1="492.30" x2="1004.1" y2="492.30" stroke="#3f3f42" stroke-width="1"/><text x="19.2" y="494.90000000000003" font-size="9.4" fill="#d8d9da" text-anchor="end" textLength="9.62" lengthAdjust="spacingAndGlyphs">60</text><line x1="73.20" y1="492.3" x2="73.20" y2="597.3" stroke="#3f3f42" stroke-width="1"/><text x="73.2" y="611.7" font-size="9.4" fill="#d8d9da" text-anchor="middle" textLength="21.3" lengthAdjust="spacingAndGlyphs">19:02</text><line x1="138.65" y1="492.3" x2="138.65" y2="597.3" stroke="#3f3f42" stroke-width="1"/><text x="138.65" y="611.7" font-size="9.4" fill="#d8d9da" text-anchor="middle" textLength="21.3" lengthAdjust="spacingAndGlyphs">19:03</text><line x1="204.10" y1="492.3" x2="204.10" y2="597.3" stroke="#3f3f42" stroke-width="1"/><text x="204.10000000000002" y="611.7" font-size="9.4" fill="#d8d9da" text-anchor="middle" textLength="21.3" lengthAdjust="spacingAndGlyphs">19:04</text><line x1="269.55" y1="492.3" x2="269.55" y2="597.3" stroke="#3f3f42" stroke-width="1"/><text x="269.55" y="611.7" font-size="9.4" fill="#d8d9da" text-anchor="middle" textLength="21.3" lengthAdjust="spacingAndGlyphs">19:05</text><line x1="335.00" y1="492.3" x2="335.00" y2="597.3" stroke="#3f3f42" stroke-width="1"/><text x="335.0" y="611.7" font-size="9.4" fill="#d8d9da" text-anchor="middle" textLength="21.3" lengthAdjust="spacingAndGlyphs">19:06</text><line x1="400.45" y1="492.3" x2="400.45" y2="597.3" stroke="#3f3f42" stroke-width="1"/><text x="400.45" y="611.7" font-size="9.4" fill="#d8d9da" text-anchor="middle" textLength="21.3" lengthAdjust="spacingAndGlyphs">19:07</text><line x1="465.90" y1="492.3" x2="465.90" y2="597.3" stroke="#3f3f42" stroke-width="1"/><text x="465.90000000000003" y="611.7" font-size="9.4" fill="#d8d9da" text-anchor="middle" textLength="21.3" lengthAdjust="spacingAndGlyphs">19:08</text><line x1="531.35" y1="492.3" x2="531.35" y2="597.3" stroke="#3f3f42" stroke-width="1"/><text x="531.35" y="611.7" font-size="9.4" fill="#d8d9da" text-anchor="middle" textLength="21.3" lengthAdjust="spacingAndGlyphs">19:09</text><line x1="596.80" y1="492.3" x2="596.80" y2="597.3" stroke="#3f3f42" stroke-width="1"/><text x="596.8000000000001" y="611.7" font-size="9.4" fill="#d8d9da" text-anchor="middle" textLength="21.3" lengthAdjust="spacingAndGlyphs">19:10</text><line x1="662.25" y1="492.3" x2="662.25" y2="597.3" stroke="#3f3f42" stroke-width="1"/><text x="662.2500000000001" y="611.7" font-size="9.4" fill="#d8d9da" text-anchor="middle" textLength="21.3" lengthAdjust="spacingAndGlyphs">19:11</text><line x1="727.70" y1="492.3" x2="727.70" y2="597.3" stroke="#3f3f42" stroke-width="1"/><text x="727.7" y="611.7" font-size="9.4" fill="#d8d9da" text-anchor="middle" textLength="21.3" lengthAdjust="spacingAndGlyphs">19:12</text><line x1="793.15" y1="492.3" x2="793.15" y2="597.3" stroke="#3f3f42" stroke-width="1"/><text x="793.1500000000001" y="611.7" font-size="9.4" fill="#d8d9da" text-anchor="middle" textLength="21.3" lengthAdjust="spacingAndGlyphs">19:13</text><line x1="858.60" y1="492.3" x2="858.60" y2="597.3" stroke="#3f3f42" stroke-width="1"/><text x="858.6000000000001" y="611.7" font-size="9.4" fill="#d8d9da" text-anchor="middle" textLength="21.3" lengthAdjust="spacingAndGlyphs">19:14</text><line x1="924.05" y1="492.3" x2="924.05" y2="597.3" stroke="#3f3f42" stroke-width="1"/><text x="924.0500000000001" y="611.7" font-size="9.4" fill="#d8d9da" text-anchor="middle" textLength="21.3" lengthAdjust="spacingAndGlyphs">19:15</text><line x1="989.50" y1="492.3" x2="989.50" y2="597.3" stroke="#3f3f42" stroke-width="1"/><text x="989.5000000000001" y="611.7" font-size="9.4" fill="#d8d9da" text-anchor="middle" textLength="21.3" lengthAdjust="spacingAndGlyphs">19:16</text><clipPath id="c3"><rect x="23.2" y="490.3" width="980.9" height="106.99999999999994"/></clipPath><g clip-path="url(#c3)"><path d="M22.20,558.80 L24.11,558.80 L40.48,558.80 L56.84,558.80 L73.20,558.80 L89.56,558.80 L105.93,558.80 L122.29,558.80 L138.65,558.80 L155.01,558.80 L171.38,558.80 L187.74,558.80 L204.10,548.30 L220.46,548.30 L236.82,548.30 L253.19,502.80 L269.55,502.80 L285.91,502.80 L302.28,502.80 L318.64,513.30 L335.00,513.30 L351.36,513.30 L367.73,513.30 L384.09,513.30 L400.45,513.30 L416.81,513.30 L433.18,513.30 L449.54,513.30 L465.90,513.30 L482.26,513.30 L498.62,513.30 L514.99,513.30 L531.35,513.30 L547.71,523.80 L564.08,541.30 L580.44,541.30 L596.80,541.30 L613.16,541.30 L629.53,541.30 L645.89,541.30 L662.25,541.30 L678.61,541.30 L694.98,541.30 L711.34,541.30 L727.70,541.30 L744.06,541.30 L760.43,541.30 L776.79,541.30 L793.15,541.30 L809.51,541.30 L825.88,541.30 L842.24,541.30 L858.60,551.80 L874.96,551.80 L891.33,572.80 L907.69,597.30 L924.05,597.30 L940.41,597.30 L956.78,590.30 L973.14,590.30 L989.50,590.30 L989.50,597.3 L22.20,597.3 Z" fill="#7EB26D" fill-opacity="0.1"/><path d="M22.20,558.80 L24.11,558.80 L40.48,558.80 L56.84,558.80 L73.20,558.80 L89.56,558.80 L105.93,558.80 L122.29,558.80 L138.65,558.80 L155.01,558.80 L171.38,558.80 L187.74,558.80 L204.10,548.30 L220.46,548.30 L236.82,548.30 L253.19,502.80 L269.55,502.80 L285.91,502.80 L302.28,502.80 L318.64,513.30 L335.00,513.30 L351.36,513.30 L367.73,513.30 L384.09,513.30 L400.45,513.30 L416.81,513.30 L433.18,513.30 L449.54,513.30 L465.90,513.30 L482.26,513.30 L498.62,513.30 L514.99,513.30 L531.35,513.30 L547.71,523.80 L564.08,541.30 L580.44,541.30 L596.80,541.30 L613.16,541.30 L629.53,541.30 L645.89,541.30 L662.25,541.30 L678.61,541.30 L694.98,541.30 L711.34,541.30 L727.70,541.30 L744.06,541.30 L760.43,541.30 L776.79,541.30 L793.15,541.30 L809.51,541.30 L825.88,541.30 L842.24,541.30 L858.60,551.80 L874.96,551.80 L891.33,572.80 L907.69,597.30 L924.05,597.30 L940.41,597.30 L956.78,590.30 L973.14,590.30 L989.50,590.30" fill="none" stroke="#7EB26D" stroke-width="1.35" stroke-opacity="0.85" stroke-linejoin="round"/><path d="M22.20,576.30 L24.11,576.30 L40.48,576.30 L56.84,576.30 L73.20,576.30 L89.56,576.30 L105.93,576.30 L122.29,576.30 L138.65,576.30 L155.01,576.30 L171.38,576.30 L187.74,576.30 L204.10,562.30 L220.46,562.30 L236.82,562.30 L253.19,544.80 L269.55,544.80 L285.91,544.80 L302.28,544.80 L318.64,555.30 L335.00,555.30 L351.36,555.30 L367.73,555.30 L384.09,555.30 L400.45,555.30 L416.81,555.30 L433.18,555.30 L449.54,555.30 L465.90,555.30 L482.26,555.30 L498.62,555.30 L514.99,555.30 L531.35,555.30 L547.71,560.55 L564.08,565.80 L580.44,565.80 L596.80,565.80 L613.16,565.80 L629.53,565.80 L645.89,565.80 L662.25,565.80 L678.61,565.80 L694.98,565.80 L711.34,565.80 L727.70,565.80 L744.06,565.80 L760.43,565.80 L776.79,565.80 L793.15,565.80 L809.51,565.80 L825.88,565.80 L842.24,565.80 L858.60,579.80 L874.96,579.80 L891.33,597.30 L907.69,597.30 L924.05,597.30 L940.41,592.05 L956.78,586.80 L973.14,586.80 L989.50,586.80 L989.50,597.3 L22.20,597.3 Z" fill="#EAB839" fill-opacity="0.1"/><path d="M22.20,576.30 L24.11,576.30 L40.48,576.30 L56.84,576.30 L73.20,576.30 L89.56,576.30 L105.93,576.30 L122.29,576.30 L138.65,576.30 L155.01,576.30 L171.38,576.30 L187.74,576.30 L204.10,562.30 L220.46,562.30 L236.82,562.30 L253.19,544.80 L269.55,544.80 L285.91,544.80 L302.28,544.80 L318.64,555.30 L335.00,555.30 L351.36,555.30 L367.73,555.30 L384.09,555.30 L400.45,555.30 L416.81,555.30 L433.18,555.30 L449.54,555.30 L465.90,555.30 L482.26,555.30 L498.62,555.30 L514.99,555.30 L531.35,555.30 L547.71,560.55 L564.08,565.80 L580.44,565.80 L596.80,565.80 L613.16,565.80 L629.53,565.80 L645.89,565.80 L662.25,565.80 L678.61,565.80 L694.98,565.80 L711.34,565.80 L727.70,565.80 L744.06,565.80 L760.43,565.80 L776.79,565.80 L793.15,565.80 L809.51,565.80 L825.88,565.80 L842.24,565.80 L858.60,579.80 L874.96,579.80 L891.33,597.30 L907.69,597.30 L924.05,597.30 L940.41,592.05 L956.78,586.80 L973.14,586.80 L989.50,586.80" fill="none" stroke="#EAB839" stroke-width="1.35" stroke-opacity="0.85" stroke-linejoin="round"/></g><text x="1004" y="629.0" font-size="9.4" fill="#33b5e5" text-anchor="end" font-weight="bold" textLength="29.79" lengthAdjust="spacingAndGlyphs">current</text><text x="37.7" y="645.9000000000001" font-size="9.3" fill="#d8d9da" text-anchor="start" textLength="244" lengthAdjust="spacingAndGlyphs">class: com.ibm.metrics.demo.MyMetrics, method: getMethod</text><text x="1004" y="645.9000000000001" font-size="9.3" fill="#d8d9da" text-anchor="end" textLength="4.96" lengthAdjust="spacingAndGlyphs">4</text><text x="49" y="666.1000000000001" font-size="9.3" fill="#d8d9da" text-anchor="start" textLength="456.4" lengthAdjust="spacingAndGlyphs">class: com.ibm.metrics.demo.MyMetrics, method: getMethodParam_javax.ws.rs.core.HttpHeaders_java.lang.String</text><text x="1004" y="666.1000000000001" font-size="9.3" fill="#d8d9da" text-anchor="end" textLength="4.96" lengthAdjust="spacingAndGlyphs">6</text><path d="M1028.5,458 L1049.5,458 L1028.5,479 Z" fill="#313134"/><g fill="#a8a8aa"><circle cx="1034.5" cy="462.6" r="0.95"/><rect x="1033.7" y="464.3" width="1.7" height="3.3"/><rect x="1032.9" y="466.9" width="3.3" height="0.9"/><rect x="1032.9" y="464.3" width="1.2" height="0.9"/></g><text x="1531.25" y="473.3" font-size="11.3" fill="#d8d9da" text-anchor="middle" font-weight="bold" textLength="338.5" lengthAdjust="spacingAndGlyphs">Average Response Time per Request Over Last [10m] by REST Resource</text><line x1="1070.7" y1="597.50" x2="2031" y2="597.50" stroke="#3f3f42" stroke-width="1"/><text x="1067" y="600.1" font-size="9.4" fill="#d8d9da" text-anchor="end" textLength="16.34" lengthAdjust="spacingAndGlyphs">0 ns</text><line x1="1070.7" y1="571.15" x2="2031" y2="571.15" stroke="#3f3f42" stroke-width="1"/><text x="1067" y="573.75" font-size="9.4" fill="#d8d9da" text-anchor="end" textLength="26.14" lengthAdjust="spacingAndGlyphs">250 µs</text><line x1="1070.7" y1="544.80" x2="2031" y2="544.80" stroke="#3f3f42" stroke-width="1"/><text x="1067" y="547.4" font-size="9.4" fill="#d8d9da" text-anchor="end" textLength="26.14" lengthAdjust="spacingAndGlyphs">500 µs</text><line x1="1070.7" y1="518.45" x2="2031" y2="518.45" stroke="#3f3f42" stroke-width="1"/><text x="1067" y="521.0500000000001" font-size="9.4" fill="#d8d9da" text-anchor="end" textLength="26.14" lengthAdjust="spacingAndGlyphs">750 µs</text><line x1="1070.7" y1="492.10" x2="2031" y2="492.10" stroke="#3f3f42" stroke-width="1"/><text x="1067" y="494.70000000000005" font-size="9.4" fill="#d8d9da" text-anchor="end" textLength="30.76" lengthAdjust="spacingAndGlyphs">1.00 ms</text><line x1="1120.30" y1="492.1" x2="1120.30" y2="597.5" stroke="#3f3f42" stroke-width="1"/><text x="1120.3" y="611.7" font-size="9.4" fill="#d8d9da" text-anchor="middle" textLength="21.3" lengthAdjust="spacingAndGlyphs">19:02</text><line x1="1184.28" y1="492.1" x2="1184.28" y2="597.5" stroke="#3f3f42" stroke-width="1"/><text x="1184.28" y="611.7" font-size="9.4" fill="#d8d9da" text-anchor="middle" textLength="21.3" lengthAdjust="spacingAndGlyphs">19:03</text><line x1="1248.26" y1="492.1" x2="1248.26" y2="597.5" stroke="#3f3f42" stroke-width="1"/><text x="1248.26" y="611.7" font-size="9.4" fill="#d8d9da" text-anchor="middle" textLength="21.3" lengthAdjust="spacingAndGlyphs">19:04</text><line x1="1312.24" y1="492.1" x2="1312.24" y2="597.5" stroke="#3f3f42" stroke-width="1"/><text x="1312.24" y="611.7" font-size="9.4" fill="#d8d9da" text-anchor="middle" textLength="21.3" lengthAdjust="spacingAndGlyphs">19:05</text><line x1="1376.22" y1="492.1" x2="1376.22" y2="597.5" stroke="#3f3f42" stroke-width="1"/><text x="1376.22" y="611.7" font-size="9.4" fill="#d8d9da" text-anchor="middle" textLength="21.3" lengthAdjust="spacingAndGlyphs">19:06</text><line x1="1440.20" y1="492.1" x2="1440.20" y2="597.5" stroke="#3f3f42" stroke-width="1"/><text x="1440.1999999999998" y="611.7" font-size="9.4" fill="#d8d9da" text-anchor="middle" textLength="21.3" lengthAdjust="spacingAndGlyphs">19:07</text><line x1="1504.18" y1="492.1" x2="1504.18" y2="597.5" stroke="#3f3f42" stroke-width="1"/><text x="1504.1799999999998" y="611.7" font-size="9.4" fill="#d8d9da" text-anchor="middle" textLength="21.3" lengthAdjust="spacingAndGlyphs">19:08</text><line x1="1568.16" y1="492.1" x2="1568.16" y2="597.5" stroke="#3f3f42" stroke-width="1"/><text x="1568.1599999999999" y="611.7" font-size="9.4" fill="#d8d9da" text-anchor="middle" textLength="21.3" lengthAdjust="spacingAndGlyphs">19:09</text><line x1="1632.14" y1="492.1" x2="1632.14" y2="597.5" stroke="#3f3f42" stroke-width="1"/><text x="1632.1399999999999" y="611.7" font-size="9.4" fill="#d8d9da" text-anchor="middle" textLength="21.3" lengthAdjust="spacingAndGlyphs">19:10</text><line x1="1696.12" y1="492.1" x2="1696.12" y2="597.5" stroke="#3f3f42" stroke-width="1"/><text x="1696.12" y="611.7" font-size="9.4" fill="#d8d9da" text-anchor="middle" textLength="21.3" lengthAdjust="spacingAndGlyphs">19:11</text><line x1="1760.10" y1="492.1" x2="1760.10" y2="597.5" stroke="#3f3f42" stroke-width="1"/><text x="1760.1" y="611.7" font-size="9.4" fill="#d8d9da" text-anchor="middle" textLength="21.3" lengthAdjust="spacingAndGlyphs">19:12</text><line x1="1824.08" y1="492.1" x2="1824.08" y2="597.5" stroke="#3f3f42" stroke-width="1"/><text x="1824.08" y="611.7" font-size="9.4" fill="#d8d9da" text-anchor="middle" textLength="21.3" lengthAdjust="spacingAndGlyphs">19:13</text><line x1="1888.06" y1="492.1" x2="1888.06" y2="597.5" stroke="#3f3f42" stroke-width="1"/><text x="1888.06" y="611.7" font-size="9.4" fill="#d8d9da" text-anchor="middle" textLength="21.3" lengthAdjust="spacingAndGlyphs">19:14</text><line x1="1952.04" y1="492.1" x2="1952.04" y2="597.5" stroke="#3f3f42" stroke-width="1"/><text x="1952.04" y="611.7" font-size="9.4" fill="#d8d9da" text-anchor="middle" textLength="21.3" lengthAdjust="spacingAndGlyphs">19:15</text><line x1="2016.02" y1="492.1" x2="2016.02" y2="597.5" stroke="#3f3f42" stroke-width="1"/><text x="2016.02" y="611.7" font-size="9.4" fill="#d8d9da" text-anchor="middle" textLength="21.3" lengthAdjust="spacingAndGlyphs">19:16</text><clipPath id="c4"><rect x="1070.7" y="490.1" width="960.3" height="107.39999999999998"/></clipPath><g clip-path="url(#c4)"><path d="M1069.70,545.12 L1072.32,545.12 L1088.31,545.12 L1104.31,545.12 L1120.30,545.12 L1136.29,545.12 L1152.29,545.12 L1168.28,545.12 L1184.28,545.12 L1200.27,545.12 L1216.27,545.12 L1232.26,545.12 L1248.26,542.16 L1264.25,542.16 L1280.25,542.16 L1296.24,546.80 L1312.24,546.80 L1328.23,546.80 L1344.23,546.80 L1360.22,546.80 L1376.22,546.80 L1392.21,546.80 L1408.21,546.80 L1424.20,546.80 L1440.20,546.80 L1456.19,546.80 L1472.19,546.80 L1488.18,546.80 L1504.18,546.80 L1520.17,546.80 L1536.17,546.80 L1552.16,546.80 L1568.16,546.80 L1584.15,548.49 L1600.15,547.33 L1616.14,547.33 L1632.14,547.33 L1648.13,547.33 L1664.13,547.33 L1680.12,547.33 L1696.12,547.33 L1712.11,547.33 L1728.11,547.33 L1744.11,547.33 L1760.10,547.33 L1776.09,547.33 L1792.09,547.33 L1808.09,547.33 L1824.08,547.33 L1840.07,547.33 L1856.07,547.33 L1872.07,547.33 L1888.06,549.96 L1904.05,549.96 L1920.05,561.24 L1920.05,597.5 L1069.70,597.5 Z" fill="#7EB26D" fill-opacity="0.1"/><path d="M1069.70,545.12 L1072.32,545.12 L1088.31,545.12 L1104.31,545.12 L1120.30,545.12 L1136.29,545.12 L1152.29,545.12 L1168.28,545.12 L1184.28,545.12 L1200.27,545.12 L1216.27,545.12 L1232.26,545.12 L1248.26,542.16 L1264.25,542.16 L1280.25,542.16 L1296.24,546.80 L1312.24,546.80 L1328.23,546.80 L1344.23,546.80 L1360.22,546.80 L1376.22,546.80 L1392.21,546.80 L1408.21,546.80 L1424.20,546.80 L1440.20,546.80 L1456.19,546.80 L1472.19,546.80 L1488.18,546.80 L1504.18,546.80 L1520.17,546.80 L1536.17,546.80 L1552.16,546.80 L1568.16,546.80 L1584.15,548.49 L1600.15,547.33 L1616.14,547.33 L1632.14,547.33 L1648.13,547.33 L1664.13,547.33 L1680.12,547.33 L1696.12,547.33 L1712.11,547.33 L1728.11,547.33 L1744.11,547.33 L1760.10,547.33 L1776.09,547.33 L1792.09,547.33 L1808.09,547.33 L1824.08,547.33 L1840.07,547.33 L1856.07,547.33 L1872.07,547.33 L1888.06,549.96 L1904.05,549.96 L1920.05,561.24" fill="none" stroke="#7EB26D" stroke-width="1.35" stroke-opacity="0.85" stroke-linejoin="round"/><path d="M1984.03,498.42 L2000.02,498.42 L2016.02,498.42 L2016.02,597.5 L1984.03,597.5 Z" fill="#7EB26D" fill-opacity="0.1"/><path d="M1984.03,498.42 L2000.02,498.42 L2016.02,498.42" fill="none" stroke="#7EB26D" stroke-width="1.35" stroke-opacity="0.85" stroke-linejoin="round"/><path d="M1069.70,530.25 L1072.32,530.25 L1088.31,530.25 L1104.31,530.25 L1120.30,530.25 L1136.29,530.25 L1152.29,530.25 L1168.28,530.25 L1184.28,530.25 L1200.27,530.25 L1216.27,530.25 L1232.26,530.25 L1248.26,529.83 L1264.25,529.83 L1280.25,529.83 L1296.24,518.98 L1312.24,518.98 L1328.23,518.98 L1344.23,518.98 L1360.22,518.98 L1376.22,518.98 L1392.21,518.98 L1408.21,518.98 L1424.20,518.98 L1440.20,518.98 L1456.19,518.98 L1472.19,518.98 L1488.18,518.98 L1504.18,518.98 L1520.17,518.98 L1536.17,518.98 L1552.16,518.98 L1568.16,518.98 L1584.15,515.82 L1600.15,512.65 L1616.14,512.65 L1632.14,512.65 L1648.13,512.65 L1664.13,512.65 L1680.12,512.65 L1696.12,512.65 L1712.11,512.65 L1728.11,512.65 L1744.11,512.65 L1760.10,512.65 L1776.09,512.65 L1792.09,512.65 L1808.09,512.65 L1824.08,512.65 L1840.07,512.65 L1856.07,512.65 L1872.07,512.65 L1888.06,503.59 L1904.05,503.59 L1904.05,597.5 L1069.70,597.5 Z" fill="#EAB839" fill-opacity="0.1"/><path d="M1069.70,530.25 L1072.32,530.25 L1088.31,530.25 L1104.31,530.25 L1120.30,530.25 L1136.29,530.25 L1152.29,530.25 L1168.28,530.25 L1184.28,530.25 L1200.27,530.25 L1216.27,530.25 L1232.26,530.25 L1248.26,529.83 L1264.25,529.83 L1280.25,529.83 L1296.24,518.98 L1312.24,518.98 L1328.23,518.98 L1344.23,518.98 L1360.22,518.98 L1376.22,518.98 L1392.21,518.98 L1408.21,518.98 L1424.20,518.98 L1440.20,518.98 L1456.19,518.98 L1472.19,518.98 L1488.18,518.98 L1504.18,518.98 L1520.17,518.98 L1536.17,518.98 L1552.16,518.98 L1568.16,518.98 L1584.15,515.82 L1600.15,512.65 L1616.14,512.65 L1632.14,512.65 L1648.13,512.65 L1664.13,512.65 L1680.12,512.65 L1696.12,512.65 L1712.11,512.65 L1728.11,512.65 L1744.11,512.65 L1760.10,512.65 L1776.09,512.65 L1792.09,512.65 L1808.09,512.65 L1824.08,512.65 L1840.07,512.65 L1856.07,512.65 L1872.07,512.65 L1888.06,503.59 L1904.05,503.59" fill="none" stroke="#EAB839" stroke-width="1.35" stroke-opacity="0.85" stroke-linejoin="round"/><path d="M1984.03,537.32 L2000.02,537.32 L2016.02,537.32 L2016.02,597.5 L1984.03,597.5 Z" fill="#EAB839" fill-opacity="0.1"/><path d="M1984.03,537.32 L2000.02,537.32 L2016.02,537.32" fill="none" stroke="#EAB839" stroke-width="1.35" stroke-opacity="0.85" stroke-linejoin="round"/></g><text x="1939.3" y="629.0" font-size="9.4" fill="#33b5e5" text-anchor="end" font-weight="bold" textLength="15.37" lengthAdjust="spacingAndGlyphs">min</text><text x="1985.1" y="629.0" font-size="9.4" fill="#33b5e5" text-anchor="end" font-weight="bold" textLength="17.31" lengthAdjust="spacingAndGlyphs">max</text><text x="2030.8" y="629.0" font-size="9.4" fill="#33b5e5" text-anchor="end" font-weight="bold" textLength="14.9" lengthAdjust="spacingAndGlyphs">avg</text><text x="1064.9" y="645.9000000000001" font-size="9.3" fill="#d8d9da" text-anchor="start" textLength="244" lengthAdjust="spacingAndGlyphs">class: com.ibm.metrics.demo.MyMetrics, method: getMethod</text><text x="1939.3" y="645.9000000000001" font-size="9.3" fill="#d8d9da" text-anchor="end" textLength="26.98" lengthAdjust="spacingAndGlyphs">344 µs</text><text x="1985.1" y="645.9000000000001" font-size="9.3" fill="#d8d9da" text-anchor="end" textLength="26.98" lengthAdjust="spacingAndGlyphs">939 µs</text><text x="2030.8" y="645.9000000000001" font-size="9.3" fill="#d8d9da" text-anchor="end" textLength="26.98" lengthAdjust="spacingAndGlyphs">507 µs</text><text x="1076.2" y="666.1000000000001" font-size="9.3" fill="#d8d9da" text-anchor="start" textLength="456" lengthAdjust="spacingAndGlyphs">class: com.ibm.metrics.demo.MyMetrics, method: getMethodParam_javax.ws.rs.core.HttpHeaders_java.lang.String</text><text x="1939.3" y="666.1000000000001" font-size="9.3" fill="#d8d9da" text-anchor="end" textLength="26.98" lengthAdjust="spacingAndGlyphs">573 µs</text><text x="1985.1" y="666.1000000000001" font-size="9.3" fill="#d8d9da" text-anchor="end" textLength="26.98" lengthAdjust="spacingAndGlyphs">891 µs</text><text x="2030.8" y="666.1000000000001" font-size="9.3" fill="#d8d9da" text-anchor="end" textLength="26.98" lengthAdjust="spacingAndGlyphs">733 µs</text>
</svg>
</div></body></html>
